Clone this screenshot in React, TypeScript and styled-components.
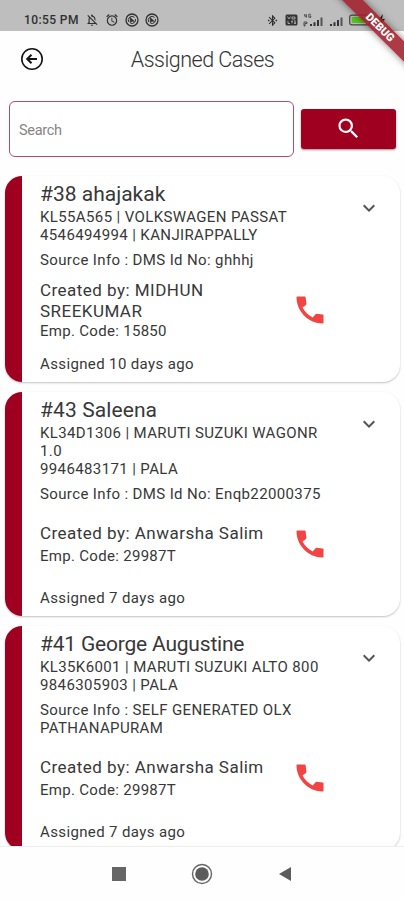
import React from "react";
import styled, { createGlobalStyle } from "styled-components";
import {
  MdBluetoothConnected,
  MdExpandMore,
  MdOutlineAlarm,
  MdOutlineNotificationsOff,
  MdSearch,
} from "react-icons/md";

const GlobalStyle = createGlobalStyle`
  * { box-sizing: border-box; }
  body { margin: 0; background: #fefefe; font-family: Roboto, sans-serif; }
`;

const Screen = styled.div`
  position: relative;
  width: 404px;
  height: 900px;
  overflow: hidden;
  display: flex;
  flex-direction: column;
  background: #fefefe;
  color: #383838;
`;

const StatusBar = styled.div`
  flex: none;
  height: 31px;
  padding: 10px 18px 0 24px;
  display: flex;
  justify-content: space-between;
  background: #bebebe;
  color: #303030;
`;

const StatusGroup = styled.div<{ $gap: number }>`
  height: 20px;
  display: flex;
  align-items: center;
  gap: ${(p) => p.$gap}px;
  svg { display: block; flex: none; }
`;

const Clock = styled.span`
  width: 55px;
  font-size: 12px;
  font-weight: 500;
  letter-spacing: 0.4px;
  white-space: nowrap;
`;

const AppBar = styled.header`
  flex: none;
  height: 56px;
  display: grid;
  grid-template-columns: 64px 277px 63px;
  align-items: center;
`;

const BackButton = styled.button`
  width: 24px;
  height: 24px;
  margin-left: 20px;
  padding: 0;
  border: 0;
  background: none;
  svg { display: block; }
`;

const PageTitle = styled.h1`
  margin: 0;
  text-align: center;
  font-size: 21.5px;
  font-weight: 300;
  letter-spacing: -0.5px;
  color: #333;
`;

const SearchRow = styled.div`
  flex: none;
  height: 57px;
  margin: 13px 8px 0 9px;
  display: flex;
  align-items: center;
  gap: 7px;
`;

const SearchField = styled.input`
  width: 285px;
  height: 56px;
  padding: 3px 9px 0;
  border: 1px solid #a75068;
  border-radius: 6px;
  outline: none;
  background: #fff;
  font: 400 14.5px Roboto, sans-serif;
  letter-spacing: -0.3px;
  &::placeholder { color: #858585; opacity: 1; }
`;

const SearchButton = styled.button`
  width: 95px;
  height: 40px;
  padding: 0;
  display: flex;
  align-items: center;
  justify-content: center;
  border: 0;
  border-radius: 3px;
  background: #a00020;
  color: #fff;
  box-shadow: 0 1px 2px rgba(60, 0, 10, 0.45);
`;

const CaseList = styled.main`
  flex: none;
  height: 690px;
  padding: 19px 4px 0 5px;
  display: flex;
  flex-direction: column;
  gap: 10px;
  overflow: hidden;
  border-bottom: 1px solid #eee;
`;

const Card = styled.article`
  flex: none;
  display: flex;
  overflow: hidden;
  border-radius: 17px;
  background: #fff;
  box-shadow: 0 1px 2px rgba(0, 0, 0, 0.24);
`;

const Stripe = styled.div`
  flex: none;
  width: 17px;
  background: #a00020;
`;

const CardBody = styled.div`
  width: 286px;
  padding: 6px 0 9px 18px;
  white-space: nowrap;
`;

const Expand = styled.button`
  width: 24px;
  height: 24px;
  margin: 20px 0 0 49px;
  padding: 0;
  border: 0;
  background: none;
  color: #555;
  svg { display: block; }
`;

const CaseName = styled.h2<{ $spacing: number }>`
  height: 26px;
  margin: 0;
  line-height: 25px;
  font-size: 21px;
  font-weight: 400;
  letter-spacing: ${(p) => p.$spacing}px;
`;

const Lines = styled.div<{ $top?: number }>`
  margin-top: ${(p) => p.$top ?? 0}px;
`;

const Line = styled.div<{ $spacing?: number }>`
  line-height: 18px;
  font-size: 15px;
  letter-spacing: ${(p) => p.$spacing ?? 0.37}px;
`;

const CreatorRow = styled.div`
  height: 86px;
  padding-bottom: 5px;
  display: flex;
  align-items: center;
`;

const Creator = styled.div`
  width: 252px;
  flex: none;
`;

const CreatorName = styled.div<{ $gap: number }>`
  margin-bottom: ${(p) => p.$gap}px;
  line-height: 21px;
  font-size: 17px;
  letter-spacing: 0.47px;
`;

const CallButton = styled.button`
  flex: none;
  width: 36px;
  height: 36px;
  padding: 0;
  border: 0;
  background: none;
  color: #f44343;
  svg { display: block; }
`;

const NavBar = styled.nav`
  flex: none;
  height: 53px;
  display: flex;
  justify-content: center;
  align-items: center;
  gap: 65px;
  svg { display: block; }
`;

const RibbonCorner = styled.div`
  position: absolute;
  top: 0;
  right: 0;
  width: 90px;
  height: 90px;
  overflow: hidden;
  pointer-events: none;
`;

const Ribbon = styled.div`
  position: absolute;
  top: 19.5px;
  left: 1px;
  width: 130px;
  height: 15px;
  display: flex;
  align-items: center;
  justify-content: center;
  transform: rotate(45deg);
  background: rgba(160, 30, 42, 0.87);
  box-shadow: 0 0 7px rgba(0, 0, 0, 0.5);
  color: #fff;
  font-size: 11px;
  font-weight: 900;
`;

const Compass = () => (
  <svg width="14" height="14" viewBox="0 0 14 14" fill="none" stroke="currentColor">
    <circle cx="7" cy="7" r="6" strokeWidth="1.3" />
    <path d="M3.8 9A3.7 3.7 0 0 1 9.5 4.4M5.5 10.2A3.6 3.6 0 0 0 10.4 6" strokeWidth="1" />
    <path d="M5 4.2 9.6 8.6 6.9 8.2 5.3 9.8Z" fill="currentColor" strokeWidth=".5" />
  </svg>
);

const VoLte = () => (
  <svg width="13" height="12" viewBox="0 0 13 12">
    <rect x=".5" y=".5" width="12" height="11" rx="1.5" fill="#333" />
    <path d="M2.5 2.5 4 5l1.5-2.5M7 3h3v2H7ZM3 7v2.5h2M6 7.2h2M7 7v2.5M9 7h2M9 8.3h2M9 9.5h2" stroke="#bebebe" fill="none" strokeWidth=".8" />
  </svg>
);

const Signal = ({ network = false }: { network?: boolean }) => (
  <svg width={network ? 21 : 14} height="15" viewBox={network ? "-7 0 21 15" : "0 0 14 15"} fill="#333">
    <path d="M0 11h2v2H0ZM3.5 9.3h2V13h-2ZM7 7h2v6H7Z" />
    <path d="M10.5 4.5h2V13h-2Z" fill="#555" />
    {network && (
      <path
        d="M-5.3 1v2.2h2M-3.7 1v3.6M.8 1.3h-2v3h2V2.9H0M-6 9h3v1.5h-2V13h-1Z"
        fill="none"
        stroke="#333"
        strokeWidth=".8"
      />
    )}
  </svg>
);

const Battery = () => (
  <svg width="37" height="14" viewBox="0 0 37 14">
    <rect x=".7" y="2.2" width="20" height="9.6" rx="2" fill="none" stroke="#444" strokeWidth="1.2" />
    <rect x="2.7" y="4" width="15" height="6" fill="#55c51d" />
    <path d="M22 5v4" stroke="#444" strokeWidth="1.5" />
    <path d="M34 1 29 7.5h3L31 12.5l5-6.5h-3Z" fill="#222" />
  </svg>
);

const BackIcon = () => (
  <svg width="24" height="24" viewBox="0 0 24 24" fill="none" stroke="#151515">
    <circle cx="12" cy="12" r="10.2" strokeWidth="1.6" />
    <path d="M17 12H7.5M11.5 7.7 7.2 12l4.3 4.3" strokeWidth="2" />
  </svg>
);

const Handset = () => (
  <svg width="36" height="36" viewBox="0 0 24 24" fill="currentColor">
    <path d="M3.5 3H8.5Q9 3 9.1 3.6L9.6 7.9Q9.6 8.3 9.3 8.6L7 10.4C8.5 13.2 10.9 15.6 13.8 17L15.7 14.8Q16 14.5 16.4 14.5L20.5 15Q21 15.1 21 15.6V20.5Q21 21 20.5 21C11 21 3 13 3 3.5Q3 3 3.5 3Z" />
  </svg>
);

type Case = {
  name: string;
  spacing: number;
  details: string[];
  source: string[];
  creator: string[];
  code: string;
  days: number;
};

const cases: Case[] = [
  {
    name: "#38 ahajakak",
    spacing: 0,
    details: ["KL55A565 | VOLKSWAGEN PASSAT", "4546494994 | KANJIRAPPALLY"],
    source: ["Source Info : DMS Id No: ghhhj"],
    creator: ["Created by: MIDHUN", "SREEKUMAR"],
    code: "15850",
    days: 10,
  },
  {
    name: "#43 Saleena",
    spacing: 0.1,
    details: ["KL34D1306 | MARUTI SUZUKI WAGONR", "1.0", "9946483171 | PALA"],
    source: ["Source Info : DMS Id No: Enqb22000375"],
    creator: ["Created by: Anwarsha Salim"],
    code: "29987T",
    days: 7,
  },
  {
    name: "#41 George Augustine",
    spacing: -0.2,
    details: ["KL35K6001 | MARUTI SUZUKI ALTO 800", "9846305903 | PALA"],
    source: ["Source Info : SELF GENERATED OLX", "PATHANAPURAM"],
    creator: ["Created by: Anwarsha Salim"],
    code: "29987T",
    days: 7,
  },
];

const CaseCard = ({ item }: { item: Case }) => (
  <Card>
    <Stripe />
    <CardBody>
      <CaseName $spacing={item.spacing}>{item.name}</CaseName>
      <Lines>
        {item.details.map((t) => <Line key={t} $spacing={0.38}>{t}</Line>)}
      </Lines>
      <Lines $top={7}>
        {item.source.map((t) => <Line key={t}>{t}</Line>)}
      </Lines>
      <CreatorRow>
        <Creator>
          <CreatorName $gap={item.creator.length > 1 ? 0 : 3}>
            {item.creator.map((t) => <div key={t}>{t}</div>)}
          </CreatorName>
          <Line $spacing={0.3}>Emp. Code: {item.code}</Line>
        </Creator>
        <CallButton aria-label="Call"><Handset /></CallButton>
      </CreatorRow>
      <Line>Assigned {item.days} days ago</Line>
    </CardBody>
    <Expand aria-label="Expand"><MdExpandMore size={24} /></Expand>
  </Card>
);

export default function App() {
  return (
    <Screen>
      <GlobalStyle />
      <StatusBar>
        <StatusGroup $gap={6}>
          <Clock>10:55 PM</Clock>
          <MdOutlineNotificationsOff size={14} />
          <MdOutlineAlarm size={14} />
          <Compass />
          <Compass />
        </StatusGroup>
        <StatusGroup $gap={5.5}>
          <MdBluetoothConnected size={13} />
          <VoLte />
          <Signal network />
          <Signal />
          <Battery />
        </StatusGroup>
      </StatusBar>
      <AppBar>
        <BackButton aria-label="Back"><BackIcon /></BackButton>
        <PageTitle>Assigned Cases</PageTitle>
      </AppBar>
      <SearchRow>
        <SearchField placeholder="Search" />
        <SearchButton aria-label="Search"><MdSearch size={27} /></SearchButton>
      </SearchRow>
      <CaseList>
        {cases.map((item) => <CaseCard key={item.name} item={item} />)}
      </CaseList>
      <NavBar>
        <svg width="14" height="14"><rect width="14" height="14" fill="#666" /></svg>
        <svg width="22" height="22" viewBox="0 0 22 22">
          <circle cx="11" cy="11" r="9.5" fill="none" stroke="#666" strokeWidth="1.4" />
          <circle cx="11" cy="11" r="6.8" fill="#5c5c5c" />
        </svg>
        <svg width="14" height="16"><path d="M13 1v14L1 8Z" fill="#5c5c5c" /></svg>
      </NavBar>
      <RibbonCorner><Ribbon>DEBUG</Ribbon></RibbonCorner>
    </Screen>
  );
}
